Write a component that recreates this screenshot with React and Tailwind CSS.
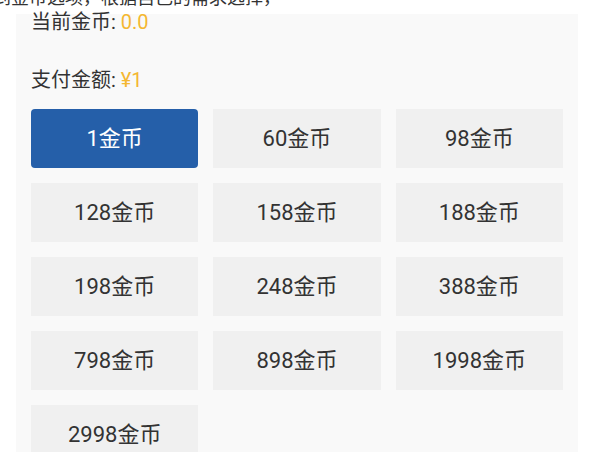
import React, { useState } from 'react';

const options = [1, 60, 98, 128, 158, 188, 198, 248, 388, 798, 898, 1998, 2998];

export default function App() {
  const [selected, setSelected] = useState(1);

  return (
    <div className="min-h-[452px] w-[603px] overflow-hidden bg-white text-[#333] font-['Roboto','Noto_Sans_CJK_SC',sans-serif]">
      <p className="-mt-[15px] mb-[3px] -ml-[7px] whitespace-nowrap text-[18px] leading-[26px] text-[#333]">
        到金币选项，根据自己的需求选择，
      </p>
      <div className="ml-[16px] w-[562px] bg-[#f9f9f9] px-[15px] pb-[20px]">
        <div className="text-[20px] leading-[16px]">
          当前金币: <span className="text-[#f4b731]">0.0</span>
        </div>
        <div className="mt-[42px] text-[20px] leading-[16px]">
          支付金额: <span className="text-[#f4b731]">¥{selected}</span>
        </div>
        <div className="mt-[21px] grid grid-cols-3 gap-[15px]">
          {options.map((n) => (
            <button
              key={n}
              onClick={() => setSelected(n)}
              className={
                n === selected
                  ? 'h-[59px] rounded-[4px] bg-[#255fa9] text-[22px] text-white'
                  : 'h-[59px] bg-[#f0f0f0] text-[22px] text-[#333]'
              }
            >
              {n}金币
            </button>
          ))}
        </div>
      </div>
    </div>
  );
}
